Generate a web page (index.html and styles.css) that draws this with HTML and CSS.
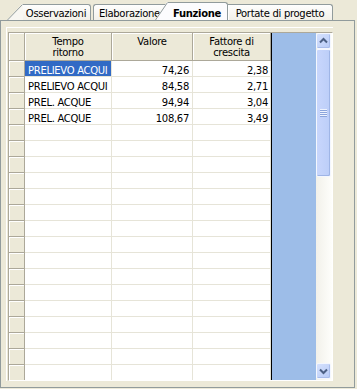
FILE: index.html
```html
<!DOCTYPE html>
<html lang="it">
<head>
    <meta charset="UTF-8">
    <title>Funzione</title>
    <link rel="stylesheet" href="styles.css">
</head>
<body>
    <div class="window">
        <!-- Tabs -->
        <div class="tabs">
            <div class="tab tab-first">
                <svg class="slant slant-first" width="16" height="16" viewBox="0 0 16 16"><polygon points="0,16 15,0 16,0 16,16" fill="#F8F7F2"/><line x1="0.5" y1="16" x2="15.5" y2="0.5" stroke="#919B9C"/></svg>
                Osservazioni
            </div>
            <div class="tab tab-second">Elaborazione</div>
            <div class="tab tab-active">
                <svg class="slant slant-active" width="13" height="18" viewBox="0 0 13 18"><polygon points="0,18 12,0 13,0 13,18" fill="#FCFCFE"/><line x1="0.5" y1="18" x2="12.5" y2="0.5" stroke="#919B9C"/></svg>
                Funzione
            </div>
            <div class="tab tab-last">Portate di progetto</div>
        </div>

        <!-- Page -->
        <div class="page">
            <div class="frame">
                <div class="grid">
                    <div class="table">
                        <div class="head">
                            <div class="hcell w0"></div>
                            <div class="hcell w1">Tempo<br>ritorno</div>
                            <div class="hcell w2">Valore</div>
                            <div class="hcell w3">Fattore di<br>crescita</div>
                        </div>
                        <div class="rows">
                            <div class="row"><div class="rh"></div><div class="cell w1 txt sel">PRELIEVO ACQUI</div><div class="cell w2 num">74,26</div><div class="cell w3 num">2,38</div></div>
                            <div class="row"><div class="rh"></div><div class="cell w1 txt">PRELIEVO ACQUI</div><div class="cell w2 num">84,58</div><div class="cell w3 num">2,71</div></div>
                            <div class="row"><div class="rh"></div><div class="cell w1 txt">PREL. ACQUE</div><div class="cell w2 num">94,94</div><div class="cell w3 num">3,04</div></div>
                            <div class="row"><div class="rh"></div><div class="cell w1 txt">PREL. ACQUE</div><div class="cell w2 num">108,67</div><div class="cell w3 num">3,49</div></div>
                            <div class="row"><div class="rh"></div><div class="cell w1"></div><div class="cell w2"></div><div class="cell w3"></div></div>
                            <div class="row"><div class="rh"></div><div class="cell w1"></div><div class="cell w2"></div><div class="cell w3"></div></div>
                            <div class="row"><div class="rh"></div><div class="cell w1"></div><div class="cell w2"></div><div class="cell w3"></div></div>
                            <div class="row"><div class="rh"></div><div class="cell w1"></div><div class="cell w2"></div><div class="cell w3"></div></div>
                            <div class="row"><div class="rh"></div><div class="cell w1"></div><div class="cell w2"></div><div class="cell w3"></div></div>
                            <div class="row"><div class="rh"></div><div class="cell w1"></div><div class="cell w2"></div><div class="cell w3"></div></div>
                            <div class="row"><div class="rh"></div><div class="cell w1"></div><div class="cell w2"></div><div class="cell w3"></div></div>
                            <div class="row"><div class="rh"></div><div class="cell w1"></div><div class="cell w2"></div><div class="cell w3"></div></div>
                            <div class="row"><div class="rh"></div><div class="cell w1"></div><div class="cell w2"></div><div class="cell w3"></div></div>
                            <div class="row"><div class="rh"></div><div class="cell w1"></div><div class="cell w2"></div><div class="cell w3"></div></div>
                            <div class="row"><div class="rh"></div><div class="cell w1"></div><div class="cell w2"></div><div class="cell w3"></div></div>
                            <div class="row"><div class="rh"></div><div class="cell w1"></div><div class="cell w2"></div><div class="cell w3"></div></div>
                            <div class="row"><div class="rh"></div><div class="cell w1"></div><div class="cell w2"></div><div class="cell w3"></div></div>
                            <div class="row"><div class="rh"></div><div class="cell w1"></div><div class="cell w2"></div><div class="cell w3"></div></div>
                            <div class="row"><div class="rh"></div><div class="cell w1"></div><div class="cell w2"></div><div class="cell w3"></div></div>
                            <div class="row"><div class="rh"></div><div class="cell w1"></div><div class="cell w2"></div><div class="cell w3"></div></div>
                        </div>
                    </div>
                    <div class="split"></div>
                    <div class="blank"></div>
                    <!-- Scrollbar -->
                    <div class="scroll">
                        <div class="sb-btn">
                            <svg width="15" height="16" viewBox="0 0 15 16"><polyline points="4,9.5 7.5,6 11,9.5" fill="none" stroke="#4D6185" stroke-width="2"/></svg>
                        </div>
                        <div class="sb-thumb"><div class="grip"></div></div>
                        <div class="sb-track"></div>
                        <div class="sb-btn">
                            <svg width="15" height="16" viewBox="0 0 15 16"><polyline points="4,6.5 7.5,10 11,6.5" fill="none" stroke="#4D6185" stroke-width="2"/></svg>
                        </div>
                    </div>
                </div>
            </div>
        </div>
    </div>
</body>
</html>
```

FILE: styles.css
```css
* { box-sizing: border-box; margin: 0; padding: 0; }
body { font-family: 'DejaVu Sans', 'Liberation Sans', sans-serif; font-size: 10px; letter-spacing: -0.3px; color: #000; background: #ECE9D8; }
.window { width: 357px; height: 389px; overflow: hidden; }

/* tabs */
.tabs { display: flex; align-items: flex-end; height: 20px; padding-left: 22px; }
.tab { position: relative; height: 16px; border: 1px solid #919B9C; border-bottom: none; border-radius: 3px 3px 0 0; background: linear-gradient(#FEFEFE, #F2F0E8); padding-top: 2px; line-height: 14px; white-space: nowrap; text-align: center; }
.tab-first { width: 69px; border-left: none; border-top-left-radius: 0; }
.tab-second { width: 74px; margin-left: 2px; padding-left: 5px; text-align: left; border-right: none; border-top-right-radius: 0; }
.tab-active { width: 61px; height: 18px; padding-top: 4px; font-weight: bold; background: #FCFCFE; border-left: none; border-top-left-radius: 0; z-index: 2; }
.tab-last { width: 105px; border-left: none; border-top-left-radius: 0; box-shadow: inset 1px 0 #fff; }
.slant { position: absolute; top: -1px; display: block; }
.slant-first { left: -15px; }
.slant-active { left: -12px; }

/* page */
.page { width: 355px; height: 368px; border: 1px solid #919B9C; background: #ECE9D8; padding: 6px 0 0 5px; }
.frame { width: 327px; border-left: 1px solid #fff; border-top: 1px solid #fff; padding: 4px 0 0 1px; }
.grid { display: flex; width: 325px; height: 349px; border: 1px solid; border-color: #ACA899 #fff #fff #ACA899; }

/* table */
.table { width: 262px; display: flex; flex-direction: column; background: #fff; }
.head { display: flex; height: 28px; }
.hcell { height: 28px; background: #ECE9D8; border-right: 1px solid #ACA899; border-bottom: 1px solid #ACA899; box-shadow: inset 1px 1px #fff; text-align: center; line-height: 11px; padding-top: 3px; }
.w0 { width: 16px; }
.w1 { width: 87px; }
.w2 { width: 81px; }
.w3 { width: 78px; }
.rows { height: 319px; overflow: hidden; }
.row { display: flex; height: 16px; }
.rh { width: 16px; height: 16px; background: #ECE9D8; border-right: 1px solid #ACA899; border-bottom: 1px solid #ACA899; box-shadow: inset 1px 1px #fff; }
.cell { height: 16px; border-right: 1px solid #E6E4D8; border-bottom: 1px solid #E6E4D8; line-height: 15px; padding-top: 2px; white-space: nowrap; background-clip: padding-box; }
.txt { padding-left: 3px; overflow: hidden; }
.num { text-align: right; padding-right: 3px; }
.w3.num { padding-right: 2px; }
.sel { background-color: #316AC5; color: #fff; }

.split { width: 1px; background: #000; }
.blank { width: 44px; background: #9DBDE8; }

/* scrollbar */
.scroll { width: 16px; display: flex; flex-direction: column; padding-bottom: 1px; background: linear-gradient(to right, #F2F1EA, #FEFEFB); }
.sb-btn { width: 15px; height: 16px; border: 1px solid #F4F7FE; border-radius: 2px; background: linear-gradient(135deg, #D5E1FD, #B8CBF6); box-shadow: inset -1px -1px #A9BDEB; }
.sb-btn svg { display: block; margin: -1px 0 0 -1px; }
.sb-thumb { width: 15px; height: 128px; display: flex; align-items: center; justify-content: center; border: 1px solid #F4F7FE; border-radius: 2px; background: linear-gradient(to right, #C8D6FC, #BCCEF8); box-shadow: inset -1px -1px #9FB5E6; }
.grip { width: 7px; height: 8px; background: repeating-linear-gradient(to bottom, #EEF3FE 0 1px, #8CA5DB 1px 2px); }
.sb-track { flex: 1; }
```
